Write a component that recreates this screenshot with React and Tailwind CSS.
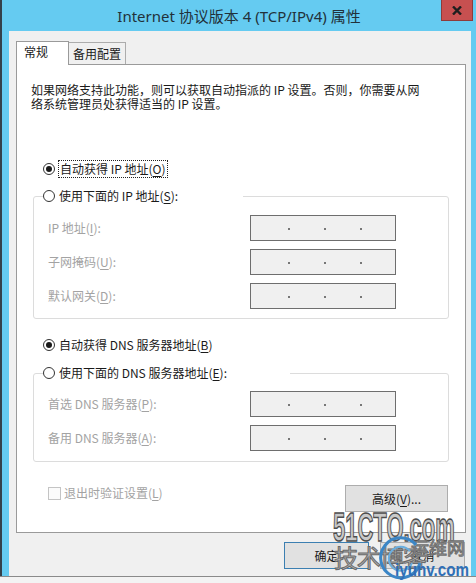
import React from "react";

const U = ({ children }) => <span className="underline underline-offset-2">{children}</span>;

function Radio({ checked }) {
  return (
    <span className="w-[12px] h-[12px] rounded-full border border-[#333] bg-white flex items-center justify-center shrink-0">
      {checked && <span className="w-[6px] h-[6px] rounded-full bg-[#1a1a1a]" />}
    </span>
  );
}

function IpBox() {
  return (
    <div className="w-[146px] h-[26px] border border-[#6e6e6e] bg-[#f0f0f0] flex items-center pl-[37px] gap-[34px] pt-[2px] mr-[52px]">
      <span className="w-[2px] h-[2px] bg-[#777]" />
      <span className="w-[2px] h-[2px] bg-[#777]" />
      <span className="w-[2px] h-[2px] bg-[#777]" />
    </div>
  );
}

function Row({ label }) {
  return (
    <div className="flex items-center h-[26px]">
      <div className="flex-1 pl-[14px] text-[#a3a3a3]">{label}</div>
      <IpBox />
    </div>
  );
}

export default function App() {
  return (
    <div className="w-[476px] h-[583px] overflow-hidden relative bg-[#f3f3f3] font-['Noto_Sans_CJK_SC',sans-serif] text-[12px] text-[#1a1a1a]">
      <div className="flex h-[576px]">
        <div className="w-[2px] bg-[#34414b]" />
        <div className="flex-1 flex flex-col bg-[#65cbf1]">
          {/* title bar */}
          <div className="h-[31px] grid grid-cols-[1fr_auto_1fr] items-center">
            <div />
            <div className="text-[15px] leading-[20px] text-[#22313a] font-['Noto_Sans','Noto_Sans_CJK_SC',sans-serif] pt-[1px]">
              Internet 协议版本 4 (TCP/IPv4) 属性
            </div>
            <div className="self-start justify-self-end mr-[3px] w-[32px] h-[21px] bg-[#c75050] border border-[#8e3b3b] border-t-0 flex items-center justify-center">
              <svg width="10" height="9" viewBox="0 0 10 9">
                <path d="M1 0.5 L9 8.5 M9 0.5 L1 8.5" stroke="#1e1e1e" strokeWidth="2.4" />
              </svg>
            </div>
          </div>
          {/* client */}
          <div className="flex-1 ml-[7px] mr-[5px] bg-[#f0f0f0] pl-[7px] pr-[5px] pt-[10px] flex flex-col">
            <div className="flex items-end h-[23px]">
              <div className="relative z-10 -mb-[1px] w-[53px] h-[24px] bg-white border border-b-0 border-[#9a9a9a] pl-[7px] pb-[3px] flex items-center">
                常规
              </div>
              <div className="w-[57px] h-[22px] bg-[#f0f0f0] border-t border-r border-[#acacac] pl-[4px] flex items-center">
                备用配置
              </div>
            </div>
            <div className="h-[469px] border border-[#9a9a9a] bg-white flex flex-col">
              <div className="ml-[14px] mt-[18px] leading-[14px]">
                如果网络支持此功能，则可以获取自动指派的 IP 设置。否则，你需要从网
                <br />
                络系统管理员处获得适当的 IP 设置。
              </div>

              <div className="mt-[49px] ml-[26px] h-[18px] flex items-center gap-[3px]">
                <Radio checked />
                <span className="border border-dotted border-[#222] px-[1px] leading-[16px]">
                  自动获得 IP 地址(<U>O</U>)
                </span>
              </div>

              <fieldset className="mt-[9px] ml-[16px] w-[416px] border border-[#dcdcdc] rounded-[3px] pb-[9px]">
                <legend className="ml-[9px] w-[200px] h-[18px] bg-white">
                  <div className="flex items-center gap-[4px] h-[18px]">
                    <Radio />
                    <span>使用下面的 IP 地址(<U>S</U>):</span>
                  </div>
                </legend>
                <div className="mt-[10px] flex flex-col gap-[8px]">
                  <Row label={<>IP 地址(<U>I</U>):</>} />
                  <Row label={<>子网掩码(<U>U</U>):</>} />
                  <Row label={<>默认网关(<U>D</U>):</>} />
                </div>
              </fieldset>

              <div className="mt-[17px] ml-[26px] h-[18px] flex items-center gap-[4px]">
                <Radio checked />
                <span>自动获得 DNS 服务器地址(<U>B</U>)</span>
              </div>

              <fieldset className="mt-[10px] ml-[16px] w-[416px] border border-[#dcdcdc] rounded-[3px] pb-[10px]">
                <legend className="ml-[9px] w-[247px] h-[18px] bg-white">
                  <div className="flex items-center gap-[4px] h-[18px]">
                    <Radio />
                    <span>使用下面的 DNS 服务器地址(<U>E</U>):</span>
                  </div>
                </legend>
                <div className="mt-[9px] flex flex-col gap-[8px]">
                  <Row label={<>首选 DNS 服务器(<U>P</U>):</>} />
                  <Row label={<>备用 DNS 服务器(<U>A</U>):</>} />
                </div>
              </fieldset>

              <div className="mt-[23px] flex items-start justify-between">
                <div className="ml-[31px] h-[16px] flex items-center gap-[3px] text-[#a3a3a3]">
                  <span className="w-[13px] h-[13px] border border-[#c4c4c4] bg-[#fbfbfb]" />
                  <span>退出时验证设置(<U>L</U>)</span>
                </div>
                <div className="mr-[17px] w-[103px] h-[27px] bg-[#e1e1e1] border border-[#adadad] flex items-center justify-center">
                  高级(<U>V</U>)...
                </div>
              </div>
            </div>
            <div className="mt-[9px] flex justify-end gap-[11px] mr-[1px]">
              <div className="w-[85px] h-[27px] bg-[#e1e1e1] border border-[#3c7fb1] flex items-center justify-center">
                确定
              </div>
              <div className="w-[85px] h-[27px] bg-[#e1e1e1] border border-[#adadad] flex items-center justify-center">
                取消
              </div>
            </div>
          </div>
        </div>
      </div>
      <div className="h-[1px] bg-[#8a8a8a]" />
      <div className="h-[6px] bg-[#f3f3f3]" />

      {/* watermark overlay */}
      <div className="absolute left-[333px] top-[507px] origin-left scale-x-[0.55] font-['Liberation_Sans',sans-serif] font-bold text-[40px] leading-none text-[#c9c9c9] [-webkit-text-stroke:1.5px_#4d4d4d] whitespace-nowrap">
        51CTO.com
      </div>
      <div className="absolute left-[334px] top-[545px] font-['Noto_Sans_CJK_SC',sans-serif] text-[24px] leading-none text-[#b5b5b5] [-webkit-text-stroke:1px_#6a6a6a] whitespace-nowrap tracking-[-1px]">
        技术博客
      </div>
      <div className="absolute left-[411px] top-[538px] font-['Noto_Sans_CJK_SC',sans-serif] text-[18px] leading-none text-[#c2c2c2] [-webkit-text-stroke:1px_#707070] whitespace-nowrap">
        运维网
      </div>
      <svg className="absolute left-[376px] top-[533px]" width="50" height="50" viewBox="0 0 50 50">
        <path d="M40 12 A20 20 0 1 0 44 30" fill="none" stroke="#3b86c6" strokeWidth="3" />
        <path d="M34 18 A12 12 0 1 0 36 30" fill="none" stroke="#6aaedf" strokeWidth="2" />
      </svg>
      <div className="absolute left-[395px] top-[560px] origin-left scale-x-[0.8] font-['Liberation_Sans',sans-serif] font-bold text-[19px] leading-none text-[#2f6fb6] whitespace-nowrap">
        iyunv.com
      </div>
    </div>
  );
}
